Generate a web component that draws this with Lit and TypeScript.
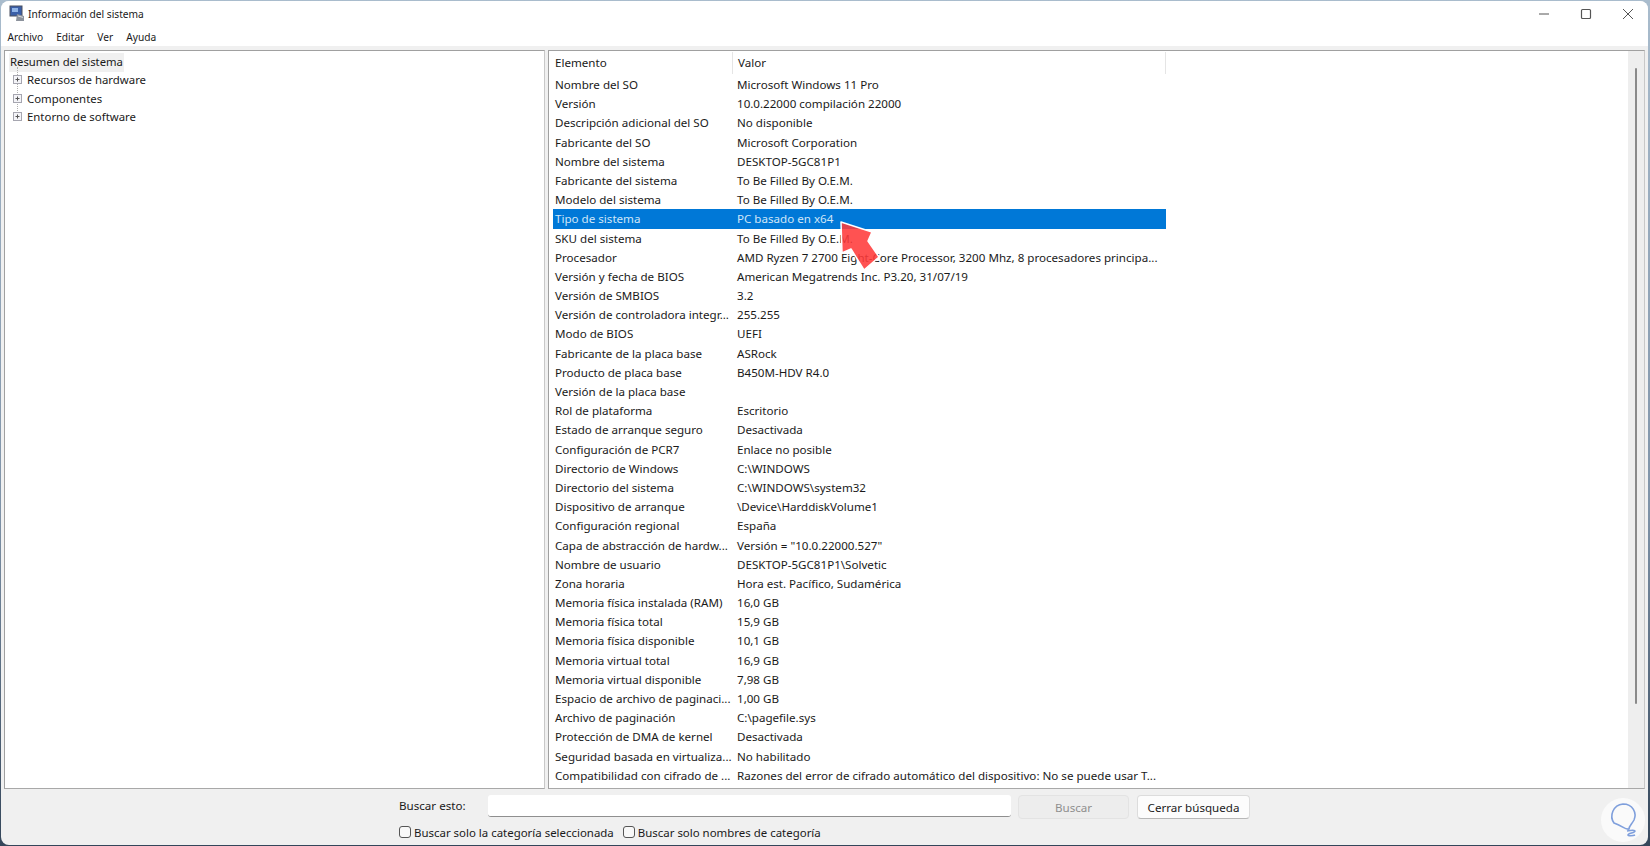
import { LitElement, html, css, svg } from "lit";
import { customElement } from "lit/decorators.js";

const ROWS: [string, string][] = [
  ["Nombre del SO", "Microsoft Windows 11 Pro"],
  ["Versión", "10.0.22000 compilación 22000"],
  ["Descripción adicional del SO", "No disponible"],
  ["Fabricante del SO", "Microsoft Corporation"],
  ["Nombre del sistema", "DESKTOP-5GC81P1"],
  ["Fabricante del sistema", "To Be Filled By O.E.M."],
  ["Modelo del sistema", "To Be Filled By O.E.M."],
  ["Tipo de sistema", "PC basado en x64"],
  ["SKU del sistema", "To Be Filled By O.E.M."],
  ["Procesador", "AMD Ryzen 7 2700 Eight-Core Processor, 3200 Mhz, 8 procesadores principa..."],
  ["Versión y fecha de BIOS", "American Megatrends Inc. P3.20, 31/07/19"],
  ["Versión de SMBIOS", "3.2"],
  ["Versión de controladora integr...", "255.255"],
  ["Modo de BIOS", "UEFI"],
  ["Fabricante de la placa base", "ASRock"],
  ["Producto de placa base", "B450M-HDV R4.0"],
  ["Versión de la placa base", ""],
  ["Rol de plataforma", "Escritorio"],
  ["Estado de arranque seguro", "Desactivada"],
  ["Configuración de PCR7", "Enlace no posible"],
  ["Directorio de Windows", "C:\\WINDOWS"],
  ["Directorio del sistema", "C:\\WINDOWS\\system32"],
  ["Dispositivo de arranque", "\\Device\\HarddiskVolume1"],
  ["Configuración regional", "España"],
  ["Capa de abstracción de hardw...", "Versión = \"10.0.22000.527\""],
  ["Nombre de usuario", "DESKTOP-5GC81P1\\Solvetic"],
  ["Zona horaria", "Hora est. Pacífico, Sudamérica"],
  ["Memoria física instalada (RAM)", "16,0 GB"],
  ["Memoria física total", "15,9 GB"],
  ["Memoria física disponible", "10,1 GB"],
  ["Memoria virtual total", "16,9 GB"],
  ["Memoria virtual disponible", "7,98 GB"],
  ["Espacio de archivo de paginaci...", "1,00 GB"],
  ["Archivo de paginación", "C:\\pagefile.sys"],
  ["Protección de DMA de kernel", "Desactivada"],
  ["Seguridad basada en virtualiza...", "No habilitado"],
  ["Compatibilidad con cifrado de ...", "Razones del error de cifrado automático del dispositivo: No se puede usar T..."],
];

const plus = svg`<svg class="plus" width="11" height="11" viewBox="0 0 11 11"><rect x="1.5" y="1.5" width="8" height="8" fill="#f4f4f8" stroke="#a6a6b0"/><path d="M3.5 5.5h4M5.5 3.5v4" stroke="#555"/></svg>`;

@customElement("app-root")
export class AppRoot extends LitElement {
  static styles = css`
    :host {
      display: block;
      width: 1650px;
      height: 846px;
      background: linear-gradient(180deg, #a9bccd 0%, #7f93a8 60%, #34465a 100%);
      font-family: "Noto Sans", "Open Sans", sans-serif;
      font-size: 11.6px;
      color: #1a1a1a;
      overflow: hidden;
    }
    .win {
      position: relative;
      height: 844px;
      margin: 1px 0 0 1px;
      width: 1647px;
      background: #f0f0f0;
      border-radius: 8px;
      display: flex;
      flex-direction: column;
      overflow: hidden;
    }
    .top { background: #fff; height: 45px; display: flex; flex-direction: column; flex: none; }
    .title { height: 25px; display: flex; align-items: center; padding-left: 8px; gap: 2px; flex: none; position: relative; font-size: 10.2px; margin-bottom: 2px; }
    .appicon { flex: none; }
    .ctrls { position: absolute; right: -1px; top: -1px; display: flex; align-items: center; height: 27px; }
    .ctrls svg { display: block; }
    .menu { display: flex; gap: 13px; padding-left: 6.5px; height: 19px; align-items: center; font-size: 10.2px; margin-top: -1px; }
    .panes { flex: none; height: 739px; margin: 4px 3px 0 3px; display: flex; gap: 3px; }
    .pane { background: #fff; border: 1px solid #a0a0a0; border-right-color: #c8c8c8; border-bottom-color: #a8a8a8; box-sizing: border-box; }
    .left { width: 541px; flex: none; padding: 2px 0 0 4px; }
    .root { display: inline-block; background: #f0f0f0; padding: 0 1px 0 1px; height: 18.5px; line-height: 18px; font-size: 11.3px; }
    .node { position: relative; display: flex; align-items: center; height: 18.4px; gap: 4px; padding-left: 3px; font-size: 11.4px; }
    .tree { position: relative; margin-top: -1px; }
    .tree::before { content: ""; position: absolute; left: 8px; top: -4px; height: 50px; border-left: 1px dotted #b0b0b0; }
    .tree .plus { flex: none; position: relative; }
    .right { flex: 1; display: flex; min-width: 0; position: relative; }
    .list { flex: 1; min-width: 0; padding-left: 4px; }
    .head { display: grid; grid-template-columns: 180px 433px; height: 24px; align-items: center; width: 613px; }
    .head div { padding-left: 2px; height: 22px; line-height: 22px; border-right: 1px solid #e5e5e5; }
    .head div + div { padding-left: 5px; }
    .row { display: grid; grid-template-columns: 182px 431px; height: 19.2px; line-height: 19.2px; width: 613px; white-space: nowrap; }
    .row span { padding-left: 2px; overflow: hidden; }
    .row.sel { background: #0078d7; color: #cfe6f7; }
    .sb { width: 16px; flex: none; background: #eeeeee; position: relative; }
    .thumb { position: absolute; left: 7px; top: 17px; height: 636px; width: 2px; background: #8a8a8a; border-radius: 1px; }
    .find { flex: 1; position: relative; display: grid; grid-template-columns: 397px 90px 523px 7px 111px 8px 113px; grid-template-rows: 24px 20px; padding-top: 6px; row-gap: 3px; }
    .lab { grid-column: 2; display: flex; align-items: center; margin-left: -88px; padding-left: 89px; margin-top: -3px; }
    .input { grid-column: 3; height: 22px; background: #fff; border-bottom: 1px solid #8f8f8f; border-radius: 3px; box-sizing: border-box; }
    .btn { height: 24px; box-sizing: border-box; border-radius: 4px; display: flex; align-items: center; justify-content: center; }
    .b1 { grid-column: 5; background: #ededed; border: 1px solid #e3e3e3; color: #8f8f8f; }
    .b2 { grid-column: 7; background: #fcfcfc; border: 1px solid #dcdcdc; border-bottom-color: #b8b8b8; color: #1a1a1a; }
    .checks { grid-column: 1 / -1; grid-row: 2; display: flex; align-items: center; gap: 9px; padding-left: 398px; font-size: 11.45px; }
    .ck { display: flex; align-items: center; gap: 3px; }
    .box { width: 10px; height: 10px; border: 1px solid #555; border-radius: 3px; background: #f8f8f8; flex: none; }
    .arrow { position: absolute; left: 825px; top: 210px; pointer-events: none; }
    .mark { position: absolute; left: 1600px; top: 797px; pointer-events: none; }
  `;

  render() {
    return html`
      <div class="win">
        <div class="top">
          <div class="title">
            <svg class="appicon" width="17" height="17" viewBox="0 0 17 17">
              <rect x="1" y="1" width="12" height="10" fill="#3a5fa8" stroke="#4a5060"/>
              <rect x="3" y="3" width="6" height="4" fill="#8fb4e8"/>
              <path d="M8 9l7 2v5H7z" fill="#8c929c"/>
              <path d="M9 11l5 1.4" stroke="#d8dce2"/>
            </svg>
            <span>Información del sistema</span>
            <div class="ctrls">
              <svg width="42" height="27" viewBox="0 0 42 27"><path d="M16 14h10" stroke="#555"/></svg>
              <svg width="42" height="27" viewBox="0 0 42 27"><rect x="16.5" y="9.5" width="9" height="9" rx="1" fill="none" stroke="#555" stroke-width="1.2"/></svg>
              <svg width="42" height="27" viewBox="0 0 42 27"><path d="M16 9l10 10M26 9L16 19" stroke="#555" fill="none"/></svg>
            </div>
          </div>
          <div class="menu"><span>Archivo</span><span>Editar</span><span>Ver</span><span>Ayuda</span></div>
        </div>
        <div class="panes">
          <div class="pane left">
            <div class="root">Resumen del sistema</div>
            <div class="tree">
              <div class="node">${plus}<span>Recursos de hardware</span></div>
              <div class="node">${plus}<span>Componentes</span></div>
              <div class="node">${plus}<span>Entorno de software</span></div>
            </div>
          </div>
          <div class="pane right">
            <div class="list">
              <div class="head"><div>Elemento</div><div>Valor</div></div>
              <div class="rows">
                ${ROWS.map(
                  ([a, b]) => html`<div class="row ${a === "Tipo de sistema" ? "sel" : ""}"><span>${a}</span><span>${b}</span></div>`
                )}
              </div>
            </div>
            <div class="sb"><div class="thumb"></div></div>
          </div>
        </div>
        <div class="find">
          <div class="lab">Buscar esto:</div>
          <div class="input"></div>
          <div class="btn b1">Buscar</div>
          <div class="btn b2">Cerrar búsqueda</div>
          <div class="checks">
            <div class="ck"><span class="box"></span><span>Buscar solo la categoría seleccionada</span></div>
            <div class="ck"><span class="box"></span><span>Buscar solo nombres de categoría</span></div>
          </div>
        </div>
      </div>
      <svg class="arrow" width="70" height="70" viewBox="0 0 70 70">
        <path d="M16 12 L47 22 L43 31 L54 47 L39 60 L26 39 L17 43 Z" fill="#ff3a3a" fill-opacity="0.88" stroke="#fff" stroke-width="1.5" stroke-linejoin="round"/>
      </svg>
      <svg class="mark" width="46" height="46" viewBox="0 0 46 46">
        <circle cx="23" cy="23" r="22" fill="#fafafa"/>
        <path d="M14 26c-5-7-1-18 9-19 10 0 14 9 11 16-2 4-5 6-5 9-4 1-6-3-15-6z" fill="none" stroke="#7f9fdc" stroke-width="1.6"/>
        <path d="M27 34c5-1 8-1 8 0 0 2-7 2-7 4 0 1 5 1 7 0" fill="none" stroke="#7f9fdc" stroke-width="1.6"/>
      </svg>
    `;
  }
}
